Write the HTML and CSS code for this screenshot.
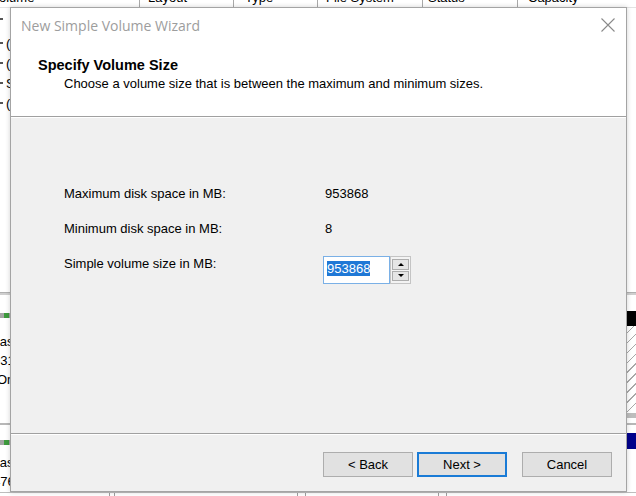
FILE: index.html
```html
<!DOCTYPE html>
<html>
<head>
<meta charset="utf-8">
<link rel="stylesheet" href="styles.css">
</head>
<body>
<div class="bg">
  <div class="colhead">
    <div class="ch c1"><span>Volume</span></div>
    <div class="ch c2"><span>Layout</span></div>
    <div class="ch c3"><span>Type</span></div>
    <div class="ch c4"><span>File System</span></div>
    <div class="ch c5"><span>Status</span></div>
    <div class="ch c6"><span>Capacity</span></div>
  </div>
  <div class="vollist">
    <div class="vol first"><i class="vicon"></i><span></span></div>
    <div class="vol"><i class="vicon"></i><span>(C:)</span></div>
    <div class="vol"><i class="vicon"></i><span>(D:)</span></div>
    <div class="vol"><i class="vicon"></i><span>System Reserved</span></div>
    <div class="vol"><i class="vicon"></i><span>(E:)</span></div>
  </div>
  <div class="splitter"></div>
  <div class="disks">
    <div class="disk d1">
      <div class="dlabel">
        <div class="dbar"><i></i></div>
        <div class="dtext t-basic">Basic</div>
        <div class="dtext t-size">931.51 GB</div>
        <div class="dtext t-online">Online</div>
      </div>
      <div class="parts">
        <div class="part-head black"></div>
        <div class="part-body hatch"></div>
        <div class="part-foot"></div>
      </div>
    </div>
    <div class="disk d2">
      <div class="dlabel">
        <div class="dbar"><i></i></div>
        <div class="dtext t-basic">Basic</div>
        <div class="dtext t-size">476.94 GB</div>
      </div>
      <div class="parts">
        <div class="part-head blue"></div>
      </div>
    </div>
  </div>
  <div class="statusbar">
    <div class="sb s1"></div>
    <div class="sb s2"></div>
    <div class="sb s3"></div>
    <div class="sb s4"></div>
  </div>
</div>

<div class="dialog">
  <div class="dlg-head">
    <div class="titlebar">
      <span class="title">New Simple Volume Wizard</span>
      <svg class="close" width="14" height="14" viewBox="0 0 14 14"><path d="M0.5 0.5 L13.5 13.5 M13.5 0.5 L0.5 13.5" stroke="#8a8a8a" stroke-width="1.1" fill="none"/></svg>
    </div>
    <div class="heading">Specify Volume Size</div>
    <div class="sub">Choose a volume size that is between the maximum and minimum sizes.</div>
  </div>
  <div class="sep"></div>
  <div class="dlg-body">
    <div class="form">
      <div class="lbl">Maximum disk space in MB:</div>
      <div class="val">953868</div>
      <div class="lbl">Minimum disk space in MB:</div>
      <div class="val">8</div>
      <div class="lbl">Simple volume size in MB:</div>
      <div class="spin">
        <div class="field"><span class="sel">953868</span></div>
        <div class="arrows">
          <div class="arr"><i class="up"></i></div>
          <div class="arr"><i class="down"></i></div>
        </div>
      </div>
    </div>
  </div>
  <div class="sep"></div>
  <div class="dlg-foot">
    <button class="btn">&lt; Back</button>
    <button class="btn default">Next &gt;</button>
    <button class="btn cancel">Cancel</button>
  </div>
</div>
</body>
</html>
```
FILE: styles.css
```css
html, body {
  margin: 0;
  padding: 0;
}
body {
  width: 636px;
  height: 496px;
  overflow: hidden;
  position: relative;
  background: #fff;
  font-family: "Liberation Sans", Arial, sans-serif;
  font-size: 13px;
  color: #000;
}

/* ---------- background: disk management ---------- */
.bg {
  display: flex;
  flex-direction: column;
  height: 496px;
}
.colhead {
  display: flex;
  flex: none;
  height: 8px;
  box-sizing: border-box;
  border-bottom: 1px solid #e3e3e3;
}
.ch {
  flex: none;
  height: 7px;
  overflow: hidden;
  box-sizing: border-box;
  border-right: 1px solid #a9a9a9;
  padding-left: 8px;
  white-space: nowrap;
}
.ch span {
  display: block;
  line-height: 14px;
  margin-top: -9px;
}
.c1 { width: 140px; padding-left: 0; text-indent: -9px; }
.c2 { width: 94px; }
.c3 { width: 84px; padding-left: 11px; }
.c4 { width: 105px; }
.c5 { width: 95px; padding-left: 5px; }
.c6 { flex: 1; border-right: none; padding-left: 10px; }

.vollist {
  flex: none;
  height: 284px;
  box-sizing: border-box;
  padding-top: 1px;
}
.vol {
  height: 20px;
  display: flex;
  align-items: center;
  white-space: nowrap;
}
.vol.first { margin-bottom: 4px; }
.vicon {
  width: 3px;
  height: 2px;
  background: #555;
  margin-right: 3px;
}
.splitter {
  flex: none;
  height: 3px;
  background: #cfcfcf;
  border-top: 1px solid #b0b0b0;
  box-sizing: border-box;
}
.disks {
  flex: none;
  height: 197px;
  display: flex;
  flex-direction: column;
}
.disk {
  display: flex;
}
.d1 { height: 128px; }
.d2 { flex: 1; border-top: 2px solid #b7b7b7; }
.dlabel {
  width: 120px;
  flex: none;
  white-space: nowrap;
  overflow: hidden;
}
.d1 .dlabel { padding-top: 18px; }
.d2 .dlabel { padding-top: 15px; }
.dbar {
  height: 5px;
  background: #a4a4a4;
  position: relative;
}
.dbar i {
  display: block;
  margin-left: 4px;
  width: 5px;
  height: 5px;
  background: #3d9a3d;
}
.d1 .dbar { margin-bottom: 14px; }
.d2 .dbar { margin-bottom: 8px; }
.dtext { line-height: 19px; }
.t-basic { text-indent: -9px; }
.t-size { text-indent: -7px; }
.t-online { text-indent: -3px; }
.parts {
  flex: 1;
  display: flex;
  flex-direction: column;
}
.d1 .parts { padding-top: 16px; }
.d2 .parts { padding-top: 8px; }
.part-head { height: 15px; }
.part-head.black { background: #000; }
.part-head.blue { height: 16px; background: #00008b; }
.part-body.hatch {
  height: 87px;
  background: repeating-linear-gradient(135deg, #fff 0 6px, #a8a8a8 6px 7px);
}
.part-foot {
  height: 5px;
  background: #bdbdbd;
}
.statusbar {
  flex: 1;
  display: flex;
  border-top: 1px solid #bdbdbd;
}
.sb {
  box-sizing: border-box;
  border-left: 1px solid #a0a0a0;
  border-right: 1px solid #a0a0a0;
}
.s1 { width: 110px; border-left: none; }
.s2 { width: 184px; margin-left: 4px; }
.s3 { width: 134px; margin-left: 7px; }
.s4 { flex: 1; margin-left: 7px; border-right: none; }

/* ---------- dialog ---------- */
.dialog {
  position: absolute;
  left: 10px;
  top: 7px;
  width: 617px;
  height: 485px;
  box-sizing: border-box;
  border: 1px solid #a4a4a4;
  background: #f0f0f0;
  display: flex;
  flex-direction: column;
  box-shadow: 0 0 5px rgba(0, 0, 0, 0.18);
}
.dlg-head {
  flex: none;
  height: 108px;
  background: #fff;
}
.titlebar {
  height: 34px;
  display: flex;
  align-items: center;
  justify-content: space-between;
  padding: 0 11px 0 10px;
}
.title {
  font-family: "Open Sans", "Noto Sans", sans-serif;
  font-size: 14px;
  color: #9d9d9d;
}
.close { display: block; }
.heading {
  margin-top: 15px;
  padding-left: 27px;
  font-weight: bold;
  font-size: 14.5px;
  line-height: 17px;
}
.sub {
  margin-top: 2px;
  padding-left: 53px;
  line-height: 16px;
}
.sep {
  flex: none;
  height: 2px;
  box-sizing: border-box;
  border-top: 1px solid #a0a0a0;
  background: #fff;
}
.dlg-body {
  flex: 1;
  padding: 58px 0 0 53px;
}
.form {
  display: grid;
  grid-template-columns: 259px auto;
  grid-auto-rows: 35px;
  align-items: start;
}
.lbl, .val {
  line-height: 35px;
}
.val { padding-left: 2px; }
.spin {
  display: flex;
  margin-top: 10px;
  height: 28px;
}
.field {
  width: 67px;
  height: 28px;
  box-sizing: border-box;
  border: 1px solid #7ab0e6;
  background: #fff;
  padding: 4px 0 0 3px;
}
.sel {
  display: inline-block;
  background: #1f78d6;
  color: #fff;
  line-height: 15px;
}
.arrows {
  width: 21px;
  height: 28px;
  box-sizing: border-box;
  border: 1px solid #c4c4c4;
  background: #f3f3f3;
  padding: 2px 1px 2px 1px;
  display: flex;
  flex-direction: column;
  gap: 1px;
}
.arr {
  flex: 1;
  box-sizing: border-box;
  border: 1px solid #adadad;
  background: #e5e5e5;
  display: flex;
  align-items: center;
  justify-content: center;
}
.arr i {
  width: 0;
  height: 0;
  border-left: 3px solid transparent;
  border-right: 3px solid transparent;
}
.arr .up { border-bottom: 3px solid #000; }
.arr .down { border-top: 3px solid #000; }
.dlg-foot {
  flex: none;
  height: 56px;
  box-sizing: border-box;
  display: flex;
  justify-content: flex-end;
  align-items: flex-start;
  padding: 17px 14px 0 0;
}
.btn {
  width: 90px;
  height: 25px;
  box-sizing: border-box;
  margin: 0;
  padding: 0;
  border: 1px solid #adadad;
  background: #e1e1e1;
  font-family: "Liberation Sans", Arial, sans-serif;
  font-size: 13px;
  color: #000;
}
.btn.default {
  margin-left: 4px;
  border: 2px solid #1a7bd6;
}
.btn.cancel { margin-left: 15px; }
```
